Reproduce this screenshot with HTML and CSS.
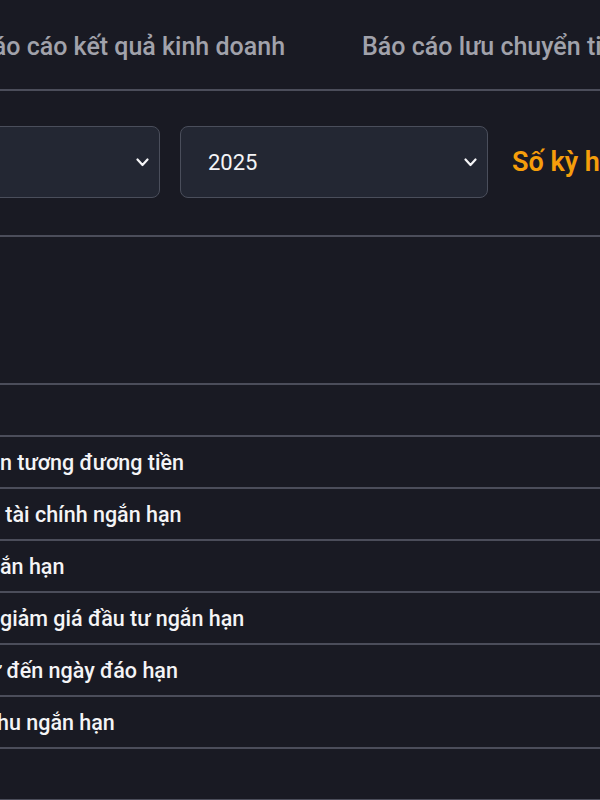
FILE: index.html
```html
<!DOCTYPE html>
<html lang="vi">
<head>
  <meta charset="UTF-8" />
  <meta name="viewport" content="width=device-width, initial-scale=1" />
  <title>Bảng cân đối kế toán</title>
  <link rel="stylesheet" href="styles.css">
</head>
<body>
  <div class="page">
    <nav class="tabs">
      <span class="tab first">Báo cáo kết quả kinh doanh</span>
      <span class="tab">Báo cáo lưu chuyển tiền tệ</span>
    </nav>

    <div class="filters">
      <div class="select wide">
        <span>Năm</span>
        <svg class="chev" viewBox="0 0 13 9"><path d="M1.5 1.5 6.5 7l5-5.5" /></svg>
      </div>
      <div class="select">
        <span>2025</span>
        <svg class="chev" viewBox="0 0 13 9"><path d="M1.5 1.5 6.5 7l5-5.5" /></svg>
      </div>
      <span class="periods">Số kỳ hiển thị</span>
    </div>

    <div class="table">
      <div class="head"></div>
      <div class="row"><span class="label"></span></div>
      <div class="row"><span class="label">n tương đương tiền</span></div>
      <div class="row"><span class="label">&nbsp;tài chính ngắn hạn</span></div>
      <div class="row"><span class="label">ắn hạn</span></div>
      <div class="row"><span class="label">giảm giá đầu tư ngắn hạn</span></div>
      <div class="row"><span class="label cut">ư đến ngày đáo hạn</span></div>
      <div class="row"><span class="label nudge">hu ngắn hạn</span></div>
      <div class="row"><span class="label"></span></div>
    </div>
  </div>
</body>
</html>
```

FILE: styles.css
```css
html, body { margin: 0; background: #191a23; }
body { font-family: Roboto, "Noto Sans", sans-serif; color: #f2f2f4; overflow: hidden; width: 600px; height: 800px; }
.page { width: 1000px; }

.tabs { display: flex; gap: 77px; align-items: center; height: 89px; border-bottom: 2px solid #4b4d5a; }
.tab { font-size: 25px; font-weight: 500; color: #a1a2ab; white-space: nowrap; margin-top: 4px; }
.tab.first { margin-left: -23px; }

.filters { display: flex; align-items: center; gap: 20px; height: 142px; padding-bottom: 2px; border-bottom: 2px solid #4b4d5a; }
.select { display: flex; align-items: center; justify-content: space-between; box-sizing: border-box; width: 308px; height: 72px; padding: 0 10px 0 27px; background: #232733; border: 1.5px solid #4a4e5b; border-radius: 8px; font-size: 22px; color: #f4f4f6; }
.select.wide { margin-left: -148px; }
.chev { width: 13px; height: 9px; fill: none; stroke: #f4f4f6; stroke-width: 2.2; stroke-linecap: round; stroke-linejoin: round; }
.periods { margin-left: 4px; font-size: 27px; font-weight: 600; color: #f59e0b; white-space: nowrap; }

.head { height: 146px; border-bottom: 2px solid #4b4d5a; }
.row { display: flex; align-items: center; height: 50px; border-bottom: 2px solid #4b4d5a; }
.label { font-size: 21.5px; font-weight: 500; color: #f4f4f6; white-space: nowrap; }
.label.cut { margin-left: -12px; }
.label.nudge { margin-left: -3px; }
```
